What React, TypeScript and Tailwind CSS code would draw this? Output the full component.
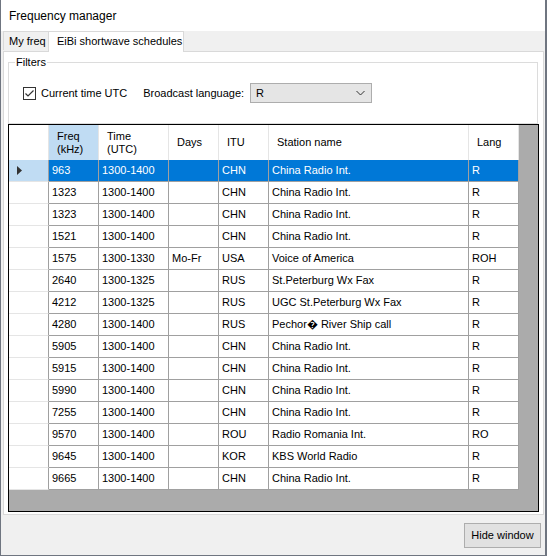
import React from "react";

const rows: string[][] = [
  ["963", "1300-1400", "", "CHN", "China Radio Int.", "R"],
  ["1323", "1300-1400", "", "CHN", "China Radio Int.", "R"],
  ["1323", "1300-1400", "", "CHN", "China Radio Int.", "R"],
  ["1521", "1300-1400", "", "CHN", "China Radio Int.", "R"],
  ["1575", "1300-1330", "Mo-Fr", "USA", "Voice of America", "ROH"],
  ["2640", "1300-1325", "", "RUS", "St.Peterburg Wx Fax", "R"],
  ["4212", "1300-1325", "", "RUS", "UGC St.Peterburg Wx Fax", "R"],
  ["4280", "1300-1400", "", "RUS", "Pechor\uFFFD River Ship call", "R"],
  ["5905", "1300-1400", "", "CHN", "China Radio Int.", "R"],
  ["5915", "1300-1400", "", "CHN", "China Radio Int.", "R"],
  ["5990", "1300-1400", "", "CHN", "China Radio Int.", "R"],
  ["7255", "1300-1400", "", "CHN", "China Radio Int.", "R"],
  ["9570", "1300-1400", "", "ROU", "Radio Romania Int.", "RO"],
  ["9645", "1300-1400", "", "KOR", "KBS World Radio", "R"],
  ["9665", "1300-1400", "", "CHN", "China Radio Int.", "R"],
];

// column widths incl. right border line
const cols = ["w-[50px]", "w-[70px]", "w-[50px]", "w-[50px]", "w-[200px]", "w-[50px]"];

const App = () => {
  return (
    <div className="w-[547px] h-[556px] bg-[#f0f0f0] border-l border-r-2 border-b border-[#6f7580] flex flex-col text-[11px] text-black font-['Liberation_Sans',Arial,sans-serif] overflow-hidden">
      {/* title */}
      <div className="h-[31px] shrink-0 bg-white flex items-center pl-[8px] pt-[1px] text-[12px]">
        Frequency manager
      </div>

      {/* tabs */}
      <div className="h-[20px] shrink-0 flex items-end pl-[2px] relative z-10 whitespace-nowrap">
        <div className="h-[19px] w-[46px] shrink-0 border border-b-0 border-[#d9d9d9] bg-[#f0f0f0] flex items-center pl-[5px] mb-[1px]">
          My freq
        </div>
        <div className="h-[21px] w-[136px] shrink-0 -ml-[1px] -mb-[1px] border border-b-0 border-[#d9d9d9] bg-white flex items-center pl-[8px] pb-[2px]">
          EiBi shortwave schedules
        </div>
      </div>

      {/* tab page */}
      <div className="ml-[2px] w-[541px] h-[464px] shrink-0 bg-white border border-[#d9d9d9] px-[4px] pt-[4px]">
        <fieldset className="w-[530px] h-[68px] border border-[#dcdcdc]">
          <legend className="ml-[6px] px-[1px] leading-[13px]">Filters</legend>
          <div className="flex items-center h-[20px] mt-[14px] pl-[14px] whitespace-nowrap">
            <svg width="13" height="13" viewBox="0 0 13 13" className="shrink-0 mt-[1px]">
              <rect x="0.5" y="0.5" width="12" height="12" fill="white" stroke="#333333" />
              <polyline points="2.5,6.5 5,9 10.5,3.5" fill="none" stroke="#333333" strokeWidth="1.2" />
            </svg>
            <span className="ml-[5px] mt-[1px]">Current time UTC</span>
            <span className="ml-[16px] mt-[1px]">Broadcast language:</span>
            <div className="ml-[6px] w-[122px] h-[20px] bg-[#e5e5e5] border border-[#adadad] flex items-center justify-between pl-[5px] pr-[6px]">
              <span>R</span>
              <svg width="9" height="6" viewBox="0 0 9 6">
                <polyline points="0.5,1 4.5,5 8.5,1" fill="none" stroke="#333333" strokeWidth="1" />
              </svg>
            </div>
          </div>
        </fieldset>

        {/* data grid */}
        <div className="w-[531px] h-[388px] border border-black bg-[#ababab] flex flex-col">
          <div className="flex h-[35px] shrink-0 bg-white w-[510px]">
            <div className="w-[40px] border-r border-[#e5e5e5]" />
            <div className="w-[50px] bg-[#c0dcf3] border-r border-[#e5e5e5] pl-[8px] pt-[5px] leading-[13px]">
              Freq
              <br />
              (kHz)
            </div>
            <div className="w-[70px] border-r border-[#e5e5e5] pl-[8px] pt-[5px] leading-[13px]">
              Time
              <br />
              (UTC)
            </div>
            {["Days", "ITU", "Station name", "Lang"].map((h, i) => (
              <div
                key={h}
                className={`${cols[i + 2]} border-r border-[#e5e5e5] pl-[8px] flex items-center`}
              >
                {h}
              </div>
            ))}
          </div>
          {rows.map((r, ri) => {
            const sel = ri === 0;
            return (
              <div key={ri} className="flex h-[22px] shrink-0 w-[510px]">
                <div
                  className={`w-[40px] border-r border-b border-r-[#a0a0a0] border-b-[#e5e5e5] flex items-center pl-[8px] ${
                    sel ? "bg-[#c0dcf3]" : "bg-white"
                  }`}
                >
                  {sel && (
                    <svg width="5" height="9" viewBox="0 0 5 9">
                      <polygon points="0,0 5,4.5 0,9" fill="#333333" />
                    </svg>
                  )}
                </div>
                {r.map((c, ci) => (
                  <div
                    key={ci}
                    className={`${cols[ci]} border-r border-b border-[#a0a0a0] flex items-center pl-[3px] whitespace-nowrap overflow-hidden ${
                      sel ? "bg-[#0078d7] text-white" : "bg-white"
                    }`}
                  >
                    {c}
                  </div>
                ))}
              </div>
            );
          })}
        </div>
      </div>

      {/* bottom */}
      <div className="flex-1 flex justify-end items-start pt-[8px] pr-[4px]">
        <button className="w-[77px] h-[25px] bg-[#e1e1e1] border border-[#adadad] flex items-center justify-center">
          Hide window
        </button>
      </div>
    </div>
  );
};

export default App;
